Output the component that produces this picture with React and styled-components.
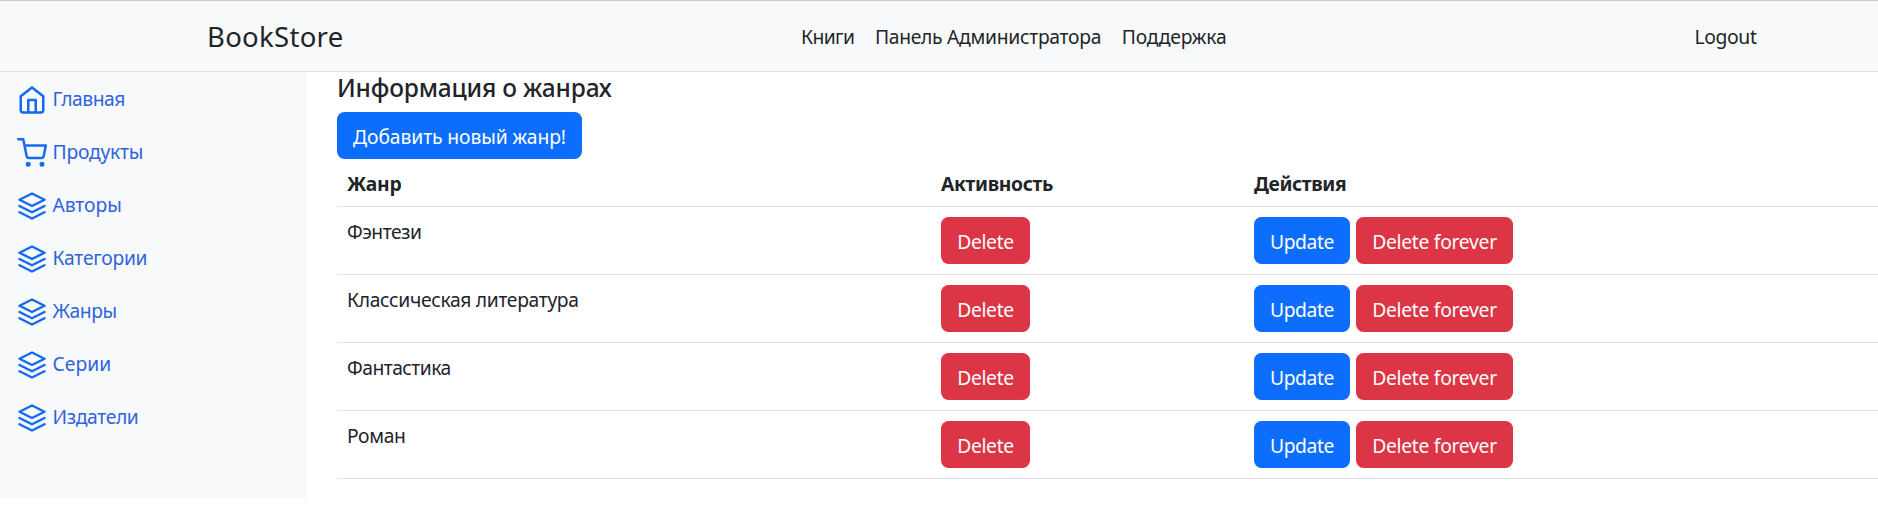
import React from 'react';
import styled, { createGlobalStyle } from 'styled-components';

const GlobalStyle = createGlobalStyle`
  *, *::before, *::after { box-sizing: border-box; }
  body {
    margin: 0;
    background: #fff;
    color: #212529;
    font-family: "Noto Sans", "Open Sans", sans-serif;
    font-size: 19.3px;
    line-height: 30px;
    overflow: hidden;
  }
`;

const Page = styled.div`
  width: 100%;
  height: 511px;
  border-top: 1px solid #c8cacd;
`;

const Navbar = styled.header`
  display: grid;
  grid-template-columns: 801px 1fr auto;
  align-items: center;
  height: 71px;
  padding: 2px 121.5px 0 0;
  background: #f8f9fa;
  border-bottom: 1px solid #dee2e6;
`;

const Brand = styled.a`
  padding-left: 207px;
  font-size: 27.5px;
  line-height: 40px;
  letter-spacing: 0.3px;
`;

const NavLinks = styled.nav`
  display: flex;
  gap: 20.5px;
`;

const NavLink = styled.a`
  letter-spacing: ${(p) => p.$spacing}px;
  white-space: nowrap;
`;

const Body = styled.div`
  display: flex;
  align-items: flex-start;
`;

const Sidebar = styled.aside`
  display: flex;
  flex-direction: column;
  gap: 13px;
  flex: none;
  width: 307px;
  height: 426px;
  padding: 10px 17px;
  background: #f8f9fa;
`;

const SideLink = styled.a`
  display: flex;
  gap: 5.5px;
  height: 40px;
  color: #2f64dc;
  letter-spacing: ${(p) => p.$spacing}px;
  line-height: 33px;
`;

const Icon = styled.svg`
  flex: none;
  width: 30px;
  height: 30px;
  margin-top: 3px;
  fill: none;
  stroke: #146cec;
  stroke-width: 2;
  stroke-linecap: round;
  stroke-linejoin: round;
`;

const Content = styled.main`
  flex: 1;
  padding-left: 30px;
`;

const Title = styled.h1`
  margin: 0;
  height: 40px;
  font-size: 24.5px;
  font-weight: 500;
  line-height: 32px;
  letter-spacing: -0.18px;
`;

const Button = styled.button`
  display: block;
  width: ${(p) => p.$width}px;
  height: 47px;
  padding: 2px 0 0;
  border: 0;
  border-radius: 7.5px;
  background: ${(p) => (p.$danger ? '#dc3545' : '#0d6efd')};
  color: #fff;
  font: inherit;
  letter-spacing: ${(p) => p.$spacing}px;
  white-space: nowrap;
`;

const Table = styled.div`
  width: 100%;
`;

const Row = styled.div`
  display: grid;
  grid-template-columns: 594px 313px 1fr;
  height: ${(p) => (p.$head ? 48 : 68)}px;
  padding: 10px;
  border-bottom: 1px solid #dee2e6;
  font-weight: ${(p) => (p.$head ? 700 : 400)};
`;

const Cell = styled.div`
  display: flex;
  gap: 6px;
  letter-spacing: ${(p) => p.$spacing}px;
`;

function HomeIcon() {
  return (
    <Icon viewBox="0 0 24 24">
      <path d="M3 9l9-7 9 7v11a2 2 0 0 1-2 2H5a2 2 0 0 1-2-2z" />
      <polyline points="9 22 9 12 15 12 15 22" />
    </Icon>
  );
}

function CartIcon() {
  return (
    <Icon viewBox="0 0 24 24">
      <circle cx="9" cy="21" r="1" />
      <circle cx="20" cy="21" r="1" />
      <path d="M1 1h4l2.68 13.39a2 2 0 0 0 2 1.61h9.72a2 2 0 0 0 2-1.61L23 6H6" />
    </Icon>
  );
}

function LayersIcon() {
  return (
    <Icon viewBox="0 0 24 24">
      <polygon points="12 2 2 7 12 12 22 7 12 2" />
      <polyline points="2 17 12 22 22 17" />
      <polyline points="2 12 12 17 22 12" />
    </Icon>
  );
}

const sideItems = [
  ['Главная', HomeIcon, -0.48],
  ['Продукты', CartIcon, -0.22],
  ['Авторы', LayersIcon, -0.06],
  ['Категории', LayersIcon, -0.26],
  ['Жанры', LayersIcon, -0.38],
  ['Серии', LayersIcon, 0],
  ['Издатели', LayersIcon, -0.37],
];

const genres = [
  ['Фэнтези', -0.48],
  ['Классическая литература', -0.33],
  ['Фантастика', -0.53],
  ['Роман', -0.36],
];

export default function App() {
  return (
    <Page>
      <GlobalStyle />
      <Navbar>
        <Brand>BookStore</Brand>
        <NavLinks>
          <NavLink $spacing={-0.58}>Книги</NavLink>
          <NavLink $spacing={-0.28}>Панель Администратора</NavLink>
          <NavLink $spacing={-0.16}>Поддержка</NavLink>
        </NavLinks>
        <NavLink $spacing={-0.37}>Logout</NavLink>
      </Navbar>
      <Body>
        <Sidebar>
          {sideItems.map(([label, Glyph, spacing]) => (
            <SideLink key={label} $spacing={spacing}>
              <Glyph />
              {label}
            </SideLink>
          ))}
        </Sidebar>
        <Content>
          <Title>Информация о жанрах</Title>
          <Button $width={245} $spacing={-0.09}>Добавить новый жанр!</Button>
          <Table>
            <Row $head>
              <Cell $spacing={-0.25}>Жанр</Cell>
              <Cell $spacing={-0.33}>Активность</Cell>
              <Cell $spacing={-0.37}>Действия</Cell>
            </Row>
            {genres.map(([name, spacing]) => (
              <Row key={name}>
                <Cell $spacing={spacing}>{name}</Cell>
                <Cell>
                  <Button $danger $width={89} $spacing={-0.34}>Delete</Button>
                </Cell>
                <Cell>
                  <Button $width={96} $spacing={-0.4}>Update</Button>
                  <Button $danger $width={157} $spacing={-0.28}>Delete forever</Button>
                </Cell>
              </Row>
            ))}
          </Table>
        </Content>
      </Body>
    </Page>
  );
}
